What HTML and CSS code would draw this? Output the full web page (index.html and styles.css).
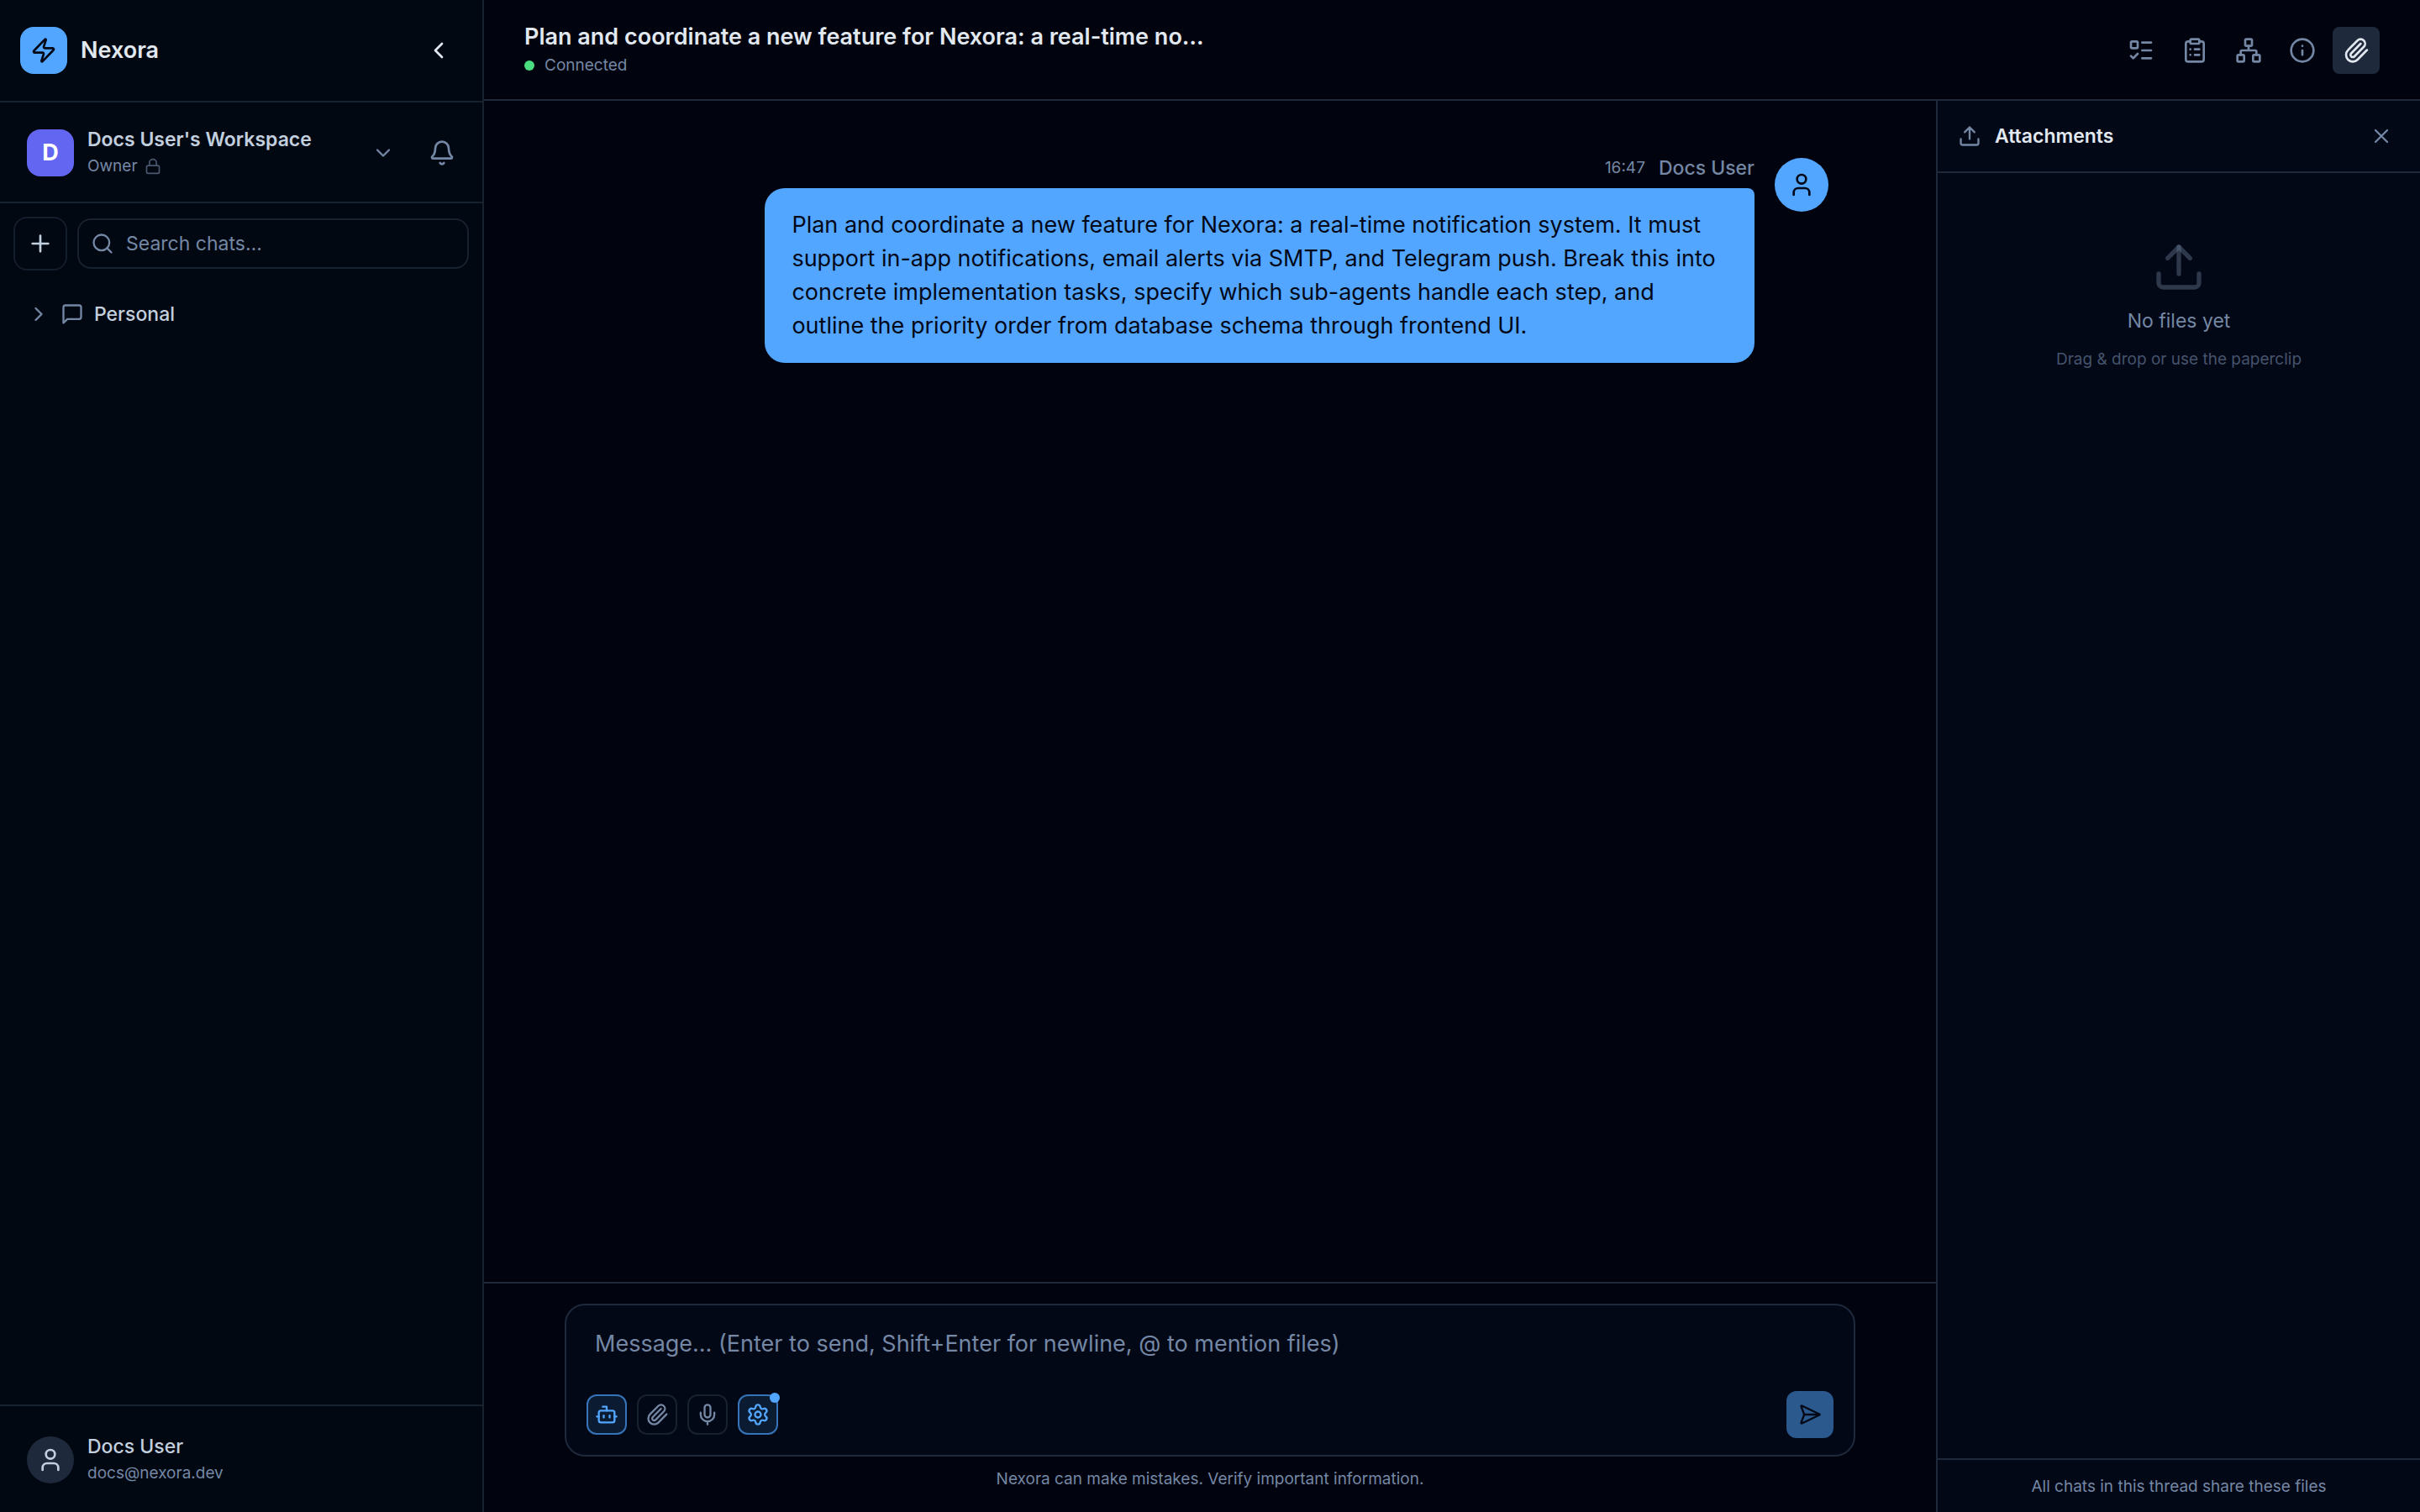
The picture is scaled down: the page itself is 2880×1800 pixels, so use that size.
FILE: index.html
```html
<!DOCTYPE html>
<html lang="en">
<head>
<meta charset="utf-8">
<meta name="viewport" content="width=device-width, initial-scale=1">
<title>Nexora</title>
<link rel="stylesheet" href="styles.css">
</head>
<body>
<div class="app">
  <aside class="sidebar">
    <div class="brand">
      <span class="logo"><svg class="icon" viewBox="0 0 24 24"><path d="M4 14a1 1 0 0 1-.78-1.63l9.9-10.2a.5.5 0 0 1 .86.46l-1.92 6.02A1 1 0 0 0 13 10h7a1 1 0 0 1 .78 1.63l-9.9 10.2a.5.5 0 0 1-.86-.46l1.92-6.02A1 1 0 0 0 11 14z"/></svg></span>
      <span class="brand-name">Nexora</span>
      <button class="icon-button collapse" aria-label="Collapse sidebar"><svg class="icon" viewBox="0 0 24 24"><path d="m15 18-6-6 6-6"/></svg></button>
    </div>

    <div class="workspace">
      <button class="workspace-switch">
        <span class="workspace-avatar">D</span>
        <span class="identity">
          <span class="identity-name strong">Docs User's Workspace</span>
          <span class="identity-meta">Owner <svg class="icon icon-xs" viewBox="0 0 24 24"><rect width="18" height="11" x="3" y="11" rx="2"/><path d="M7 11V7a5 5 0 0 1 10 0v4"/></svg></span>
        </span>
        <svg class="icon icon-sm" viewBox="0 0 24 24"><path d="m6 9 6 6 6-6"/></svg>
      </button>
      <button class="icon-button" aria-label="Notifications"><svg class="icon" viewBox="0 0 24 24"><path d="M10.268 21a2 2 0 0 0 3.464 0"/><path d="M3.262 15.326A1 1 0 0 0 4 17h16a1 1 0 0 0 .74-1.673C19.41 13.956 18 12.499 18 8A6 6 0 0 0 6 8c0 4.499-1.411 5.956-2.738 7.326"/></svg></button>
    </div>

    <div class="finder">
      <button class="new-chat" aria-label="New chat"><svg class="icon" viewBox="0 0 24 24"><path d="M5 12h14M12 5v14"/></svg></button>
      <label class="search">
        <svg class="icon icon-sm" viewBox="0 0 24 24"><circle cx="11" cy="11" r="8"/><path d="m21 21-4.34-4.34"/></svg>
        <input type="search" placeholder="Search chats…" aria-label="Search chats">
      </label>
    </div>

    <nav class="chats">
      <button class="chat-group">
        <svg class="icon icon-sm" viewBox="0 0 24 24"><path d="m9 18 6-6-6-6"/></svg>
        <svg class="icon icon-sm" viewBox="0 0 24 24"><path d="M21 15a2 2 0 0 1-2 2H7l-4 4V5a2 2 0 0 1 2-2h14a2 2 0 0 1 2 2z"/></svg>
        <span>Personal</span>
      </button>
    </nav>

    <div class="account">
      <span class="account-avatar"><svg class="icon" viewBox="0 0 24 24"><path d="M19 21v-2a4 4 0 0 0-4-4H9a4 4 0 0 0-4 4v2"/><circle cx="12" cy="7" r="4"/></svg></span>
      <span class="identity">
        <span class="identity-name">Docs User</span>
        <span class="identity-meta">docs@nexora.dev</span>
      </span>
    </div>
  </aside>

  <div class="thread">
    <header class="thread-header">
      <div class="thread-info">
        <h1>Plan and coordinate a new feature for Nexora: a real-time no…</h1>
        <p class="status">Connected</p>
      </div>
      <div class="thread-tools">
        <button class="tool" aria-label="Tasks"><svg class="icon" viewBox="0 0 24 24"><path d="M13 5h8M13 12h8M13 19h8"/><path d="m3 17 2 2 4-4"/><rect x="3" y="4" width="6" height="6" rx="1"/></svg></button>
        <button class="tool" aria-label="Plan"><svg class="icon" viewBox="0 0 24 24"><rect width="8" height="4" x="8" y="2" rx="1"/><path d="M16 4h2a2 2 0 0 1 2 2v14a2 2 0 0 1-2 2H6a2 2 0 0 1-2-2V6a2 2 0 0 1 2-2h2M12 11h4M12 16h4M8 11h.01M8 16h.01"/></svg></button>
        <button class="tool" aria-label="Agents"><svg class="icon" viewBox="0 0 24 24"><rect x="16" y="16" width="6" height="6" rx="1"/><rect x="2" y="16" width="6" height="6" rx="1"/><rect x="9" y="2" width="6" height="6" rx="1"/><path d="M5 16v-3a1 1 0 0 1 1-1h12a1 1 0 0 1 1 1v3M12 12V8"/></svg></button>
        <button class="tool" aria-label="Details"><svg class="icon" viewBox="0 0 24 24"><circle cx="12" cy="12" r="10"/><path d="M12 16v-4M12 8h.01"/></svg></button>
        <button class="tool active" aria-label="Attachments" aria-pressed="true"><svg class="icon" viewBox="0 0 24 24"><path d="m16 6-8.414 8.586a2 2 0 0 0 2.829 2.829l8.414-8.586a4 4 0 1 0-5.657-5.657l-8.379 8.551a6 6 0 1 0 8.485 8.485l8.379-8.551"/></svg></button>
      </div>
    </header>

    <div class="thread-body">
      <main class="conversation">
        <div class="messages">
          <article class="message">
            <div class="message-content">
              <div class="message-meta"><time>16:47</time><span class="author">Docs User</span></div>
              <p class="bubble">Plan and coordinate a new feature for Nexora: a real-time notification system. It must support in-app notifications, email alerts via SMTP, and Telegram push. Break this into concrete implementation tasks, specify which sub-agents handle each step, and outline the priority order from database schema through frontend UI.</p>
            </div>
            <span class="message-avatar"><svg class="icon" viewBox="0 0 24 24"><path d="M19 21v-2a4 4 0 0 0-4-4H9a4 4 0 0 0-4 4v2"/><circle cx="12" cy="7" r="4"/></svg></span>
          </article>
        </div>

        <div class="composer-area">
          <form class="composer">
            <textarea aria-label="Message" placeholder="Message… (Enter to send, Shift+Enter for newline, @ to mention files)"></textarea>
            <div class="composer-bar">
              <button type="button" class="option on" aria-label="Agent mode"><svg class="icon icon-sm" viewBox="0 0 24 24"><path d="M12 8V4H8"/><rect width="16" height="12" x="4" y="8" rx="2"/><path d="M2 14h2M20 14h2M15 13v2M9 13v2"/></svg></button>
              <button type="button" class="option" aria-label="Attach file"><svg class="icon icon-sm" viewBox="0 0 24 24"><path d="m16 6-8.414 8.586a2 2 0 0 0 2.829 2.829l8.414-8.586a4 4 0 1 0-5.657-5.657l-8.379 8.551a6 6 0 1 0 8.485 8.485l8.379-8.551"/></svg></button>
              <button type="button" class="option" aria-label="Dictate"><svg class="icon icon-sm" viewBox="0 0 24 24"><path d="M12 19v3M19 10v2a7 7 0 0 1-14 0v-2"/><rect x="9" y="2" width="6" height="13" rx="3"/></svg></button>
              <button type="button" class="option on notify" aria-label="Settings"><svg class="icon icon-sm" viewBox="0 0 24 24"><path d="M9.671 4.136a2.34 2.34 0 0 1 4.659 0 2.34 2.34 0 0 0 3.319 1.915 2.34 2.34 0 0 1 2.33 4.033 2.34 2.34 0 0 0 0 3.831 2.34 2.34 0 0 1-2.33 4.033 2.34 2.34 0 0 0-3.319 1.915 2.34 2.34 0 0 1-4.659 0 2.34 2.34 0 0 0-3.32-1.915 2.34 2.34 0 0 1-2.33-4.033 2.34 2.34 0 0 0 0-3.831A2.34 2.34 0 0 1 6.35 6.051a2.34 2.34 0 0 0 3.319-1.915"/><circle cx="12" cy="12" r="3"/></svg></button>
              <button type="submit" class="send" aria-label="Send"><svg class="icon icon-sm" viewBox="0 0 24 24"><path d="M3.714 3.048a.498.498 0 0 0-.683.627l2.843 7.627a2 2 0 0 1 0 1.396l-2.842 7.627a.498.498 0 0 0 .682.627l18-8.5a.5.5 0 0 0 0-.904zM6 12h16"/></svg></button>
            </div>
          </form>
          <p class="disclaimer">Nexora can make mistakes. Verify important information.</p>
        </div>
      </main>

      <aside class="attachments">
        <div class="attachments-header">
          <svg class="icon icon-sm" viewBox="0 0 24 24"><path d="M12 3v12M17 8l-5-5-5 5M21 15v4a2 2 0 0 1-2 2H5a2 2 0 0 1-2-2v-4"/></svg>
          <h2>Attachments</h2>
          <button class="icon-button" aria-label="Close attachments"><svg class="icon icon-sm" viewBox="0 0 24 24"><path d="M18 6 6 18M6 6l12 12"/></svg></button>
        </div>
        <div class="empty">
          <svg class="icon icon-xl" viewBox="0 0 24 24"><path d="M12 3v12"/><path d="m17 8-5-5-5 5"/><path d="M21 15v4a2 2 0 0 1-2 2H5a2 2 0 0 1-2-2v-4"/></svg>
          <p class="empty-title">No files yet</p>
          <p class="empty-hint">Drag &amp; drop or use the paperclip</p>
        </div>
        <p class="attachments-footer">All chats in this thread share these files</p>
      </aside>
    </div>
  </div>
</div>
</body>
</html>
```
FILE: styles.css
```css
:root {
  --bg: #01040e;
  --sidebar: #020812;
  --panel: #030817;
  --line: #1e293b;
  --line-soft: #18222f;
  --text: #e2e8f0;
  --text-soft: #c2cfdf;
  --muted: #7487a4;
  --faint: #45536b;
  --accent: #52a6ff;
  --ink: #020817;
  --size-lg: 27px;
  --size-md: 23px;
  --size-sm: 19px;
}

*, *::before, *::after { box-sizing: border-box; }

body {
  margin: 0;
  background: var(--bg);
  color: var(--text);
  font-family: Inter, "Liberation Sans", sans-serif;
  font-size: var(--size-md);
  line-height: 32px;
}

h1, h2, p { margin: 0; }

button, input, textarea { font: inherit; color: inherit; }

button {
  display: flex;
  align-items: center;
  justify-content: center;
  margin: 0;
  padding: 0;
  border: 0;
  background: none;
  cursor: pointer;
}

.icon {
  display: block;
  flex: none;
  width: 32px;
  height: 32px;
  fill: none;
  stroke: currentColor;
  stroke-width: 2;
  stroke-linecap: round;
  stroke-linejoin: round;
}
.icon-xs { width: 20px; height: 20px; }
.icon-sm { width: 28px; height: 28px; }
.icon-xl { width: 64px; height: 64px; }

.app {
  display: grid;
  grid-template-columns: 576px minmax(0, 1fr);
  height: 100vh;
}

/* Sidebar */
.sidebar {
  display: flex;
  flex-direction: column;
  background: var(--sidebar);
  border-right: 2px solid var(--line-soft);
}

.brand {
  display: flex;
  align-items: center;
  gap: 16px;
  padding: 32px 36px 32px 24px;
  border-bottom: 2px solid var(--line-soft);
}
.logo, .workspace-avatar, .account-avatar {
  display: flex;
  flex: none;
  align-items: center;
  justify-content: center;
  width: 56px;
  height: 56px;
  border-radius: 16px;
}
.logo { background: var(--accent); color: var(--ink); }
.brand-name { font-size: var(--size-lg); font-weight: 600; }
.icon-button { color: var(--muted); }
.collapse { margin-left: auto; color: var(--text); }

.workspace {
  display: flex;
  align-items: center;
  gap: 40px;
  padding: 30px 32px 28px;
  border-bottom: 2px solid var(--line-soft);
}
.workspace-switch {
  flex: 1;
  gap: 16px;
  height: 60px;
  color: var(--muted);
  text-align: left;
}
.workspace-avatar { background: #6366f1; color: #fff; font-size: var(--size-lg); font-weight: 700; }
.identity { display: flex; flex: 1; flex-direction: column; }
.identity-name { color: var(--text-soft); font-weight: 500; }
.strong { font-weight: 600; }
.identity-meta {
  display: flex;
  align-items: center;
  gap: 8px;
  color: var(--muted);
  font-size: var(--size-sm);
}
.identity-meta .icon { color: #4a586f; }

.finder {
  display: flex;
  align-items: center;
  gap: 12px;
  padding: 16px;
}
.new-chat {
  width: 64px;
  height: 64px;
  border: 2px solid #141d2b;
  border-radius: 16px;
  color: var(--text-soft);
}
.search {
  display: flex;
  flex: 1;
  align-items: center;
  gap: 14px;
  height: 60px;
  padding: 0 16px 0 14px;
  border: 2px solid var(--line-soft);
  border-radius: 16px;
  color: var(--muted);
}
.search input {
  flex: 1;
  min-width: 0;
  padding: 0;
  border: 0;
  outline: 0;
  background: none;
  appearance: none;
}
::placeholder { color: var(--muted); opacity: 1; }

.chats { flex: 1; padding: 8px 16px; }
.chat-group {
  justify-content: flex-start;
  gap: 12px;
  width: 100%;
  height: 56px;
  padding: 0 16px;
  color: var(--muted);
}
.chat-group span { color: var(--text-soft); font-weight: 500; }

.account {
  display: flex;
  align-items: center;
  gap: 16px;
  padding: 32px 32px 30px;
  border-top: 2px solid var(--line-soft);
}
.account-avatar { border-radius: 50%; background: var(--line); color: var(--text-soft); }

/* Thread */
.thread { display: flex; flex-direction: column; min-width: 0; }
.thread-header {
  display: flex;
  align-items: center;
  justify-content: space-between;
  gap: 48px;
  padding: 26px 48px 24px;
  border-bottom: 2px solid var(--line);
}
.thread-info { min-width: 0; }
h1 { font-size: var(--size-lg); font-weight: 600; line-height: 36px; }
.status {
  display: flex;
  align-items: center;
  gap: 12px;
  color: var(--muted);
  font-size: var(--size-sm);
}
.status::before {
  content: "";
  width: 12px;
  height: 12px;
  border-radius: 50%;
  background: #4ade80;
}
.thread-tools { display: flex; gap: 8px; }
.tool { width: 56px; height: 56px; border-radius: 8px; color: var(--muted); }
.tool.active { background: var(--line); color: var(--text); }

.thread-body { display: flex; flex: 1; min-height: 0; }
.conversation { display: flex; flex: 1; flex-direction: column; min-width: 0; }

.messages {
  flex: 1;
  width: 100%;
  max-width: 1536px;
  margin: 0 auto;
  padding: 64px 32px;
  overflow: auto;
}
.message { display: flex; justify-content: flex-end; gap: 24px; }
.message-content { display: flex; flex-direction: column; gap: 8px; max-width: 80%; }
.message-meta {
  display: flex;
  align-items: center;
  justify-content: flex-end;
  gap: 16px;
  color: var(--muted);
}
.message-meta time { font-size: var(--size-sm); }
.author { font-weight: 500; }
.bubble {
  padding: 24px 32px;
  border-radius: 24px 8px 24px 24px;
  background: var(--accent);
  color: var(--ink);
  font-size: var(--size-lg);
  line-height: 40px;
}
.message-avatar {
  display: flex;
  flex: none;
  align-items: center;
  justify-content: center;
  width: 64px;
  height: 64px;
  margin-top: 4px;
  border-radius: 50%;
  background: var(--accent);
  color: var(--ink);
}

.composer-area { padding: 24px 96px; border-top: 2px solid var(--line); }
.composer {
  max-width: 1536px;
  margin: 0 auto;
  border: 2px solid var(--line);
  border-radius: 24px;
  background: var(--panel);
}
.composer textarea {
  display: block;
  width: 100%;
  height: 102px;
  padding: 26px 34px 0;
  border: 0;
  outline: 0;
  resize: none;
  background: none;
  font-size: var(--size-lg);
  line-height: 40px;
}
.composer-bar {
  display: flex;
  align-items: center;
  gap: 12px;
  padding: 0 24px 20px;
}
.option {
  position: relative;
  width: 48px;
  height: 48px;
  border: 2px solid #172130;
  border-radius: 12px;
  color: var(--muted);
}
.option.on { border-color: #3574b8; background: #0b1b32; color: var(--accent); }
.notify::after {
  content: "";
  position: absolute;
  top: -4px;
  right: -4px;
  width: 12px;
  height: 12px;
  border-radius: 50%;
  background: var(--accent);
}
.send {
  width: 56px;
  height: 56px;
  margin-left: auto;
  border-radius: 12px;
  background: #2b598d;
  color: var(--ink);
}
.disclaimer {
  margin-top: 12px;
  color: var(--muted);
  font-size: var(--size-sm);
  line-height: 30px;
  text-align: center;
}

/* Attachments */
.attachments {
  display: flex;
  flex: none;
  flex-direction: column;
  width: 576px;
  border-left: 2px solid var(--line);
  background: var(--panel);
}
.attachments-header {
  display: flex;
  align-items: center;
  gap: 16px;
  height: 86px;
  padding: 0 32px 0 24px;
  border-bottom: 2px solid var(--line);
  color: var(--muted);
}
h2 { flex: 1; color: var(--text); font-size: var(--size-md); font-weight: 600; }
.empty {
  display: flex;
  flex: 1;
  flex-direction: column;
  align-items: center;
  gap: 16px;
  padding: 80px 24px;
  color: var(--muted);
}
.empty .icon { color: rgba(100, 116, 139, 0.45); }
.empty-hint { color: var(--faint); font-size: var(--size-sm); line-height: 28px; }
.attachments-footer {
  padding: 16px 24px 14px;
  border-top: 2px solid var(--line);
  color: var(--muted);
  font-size: var(--size-sm);
  text-align: center;
}
```
